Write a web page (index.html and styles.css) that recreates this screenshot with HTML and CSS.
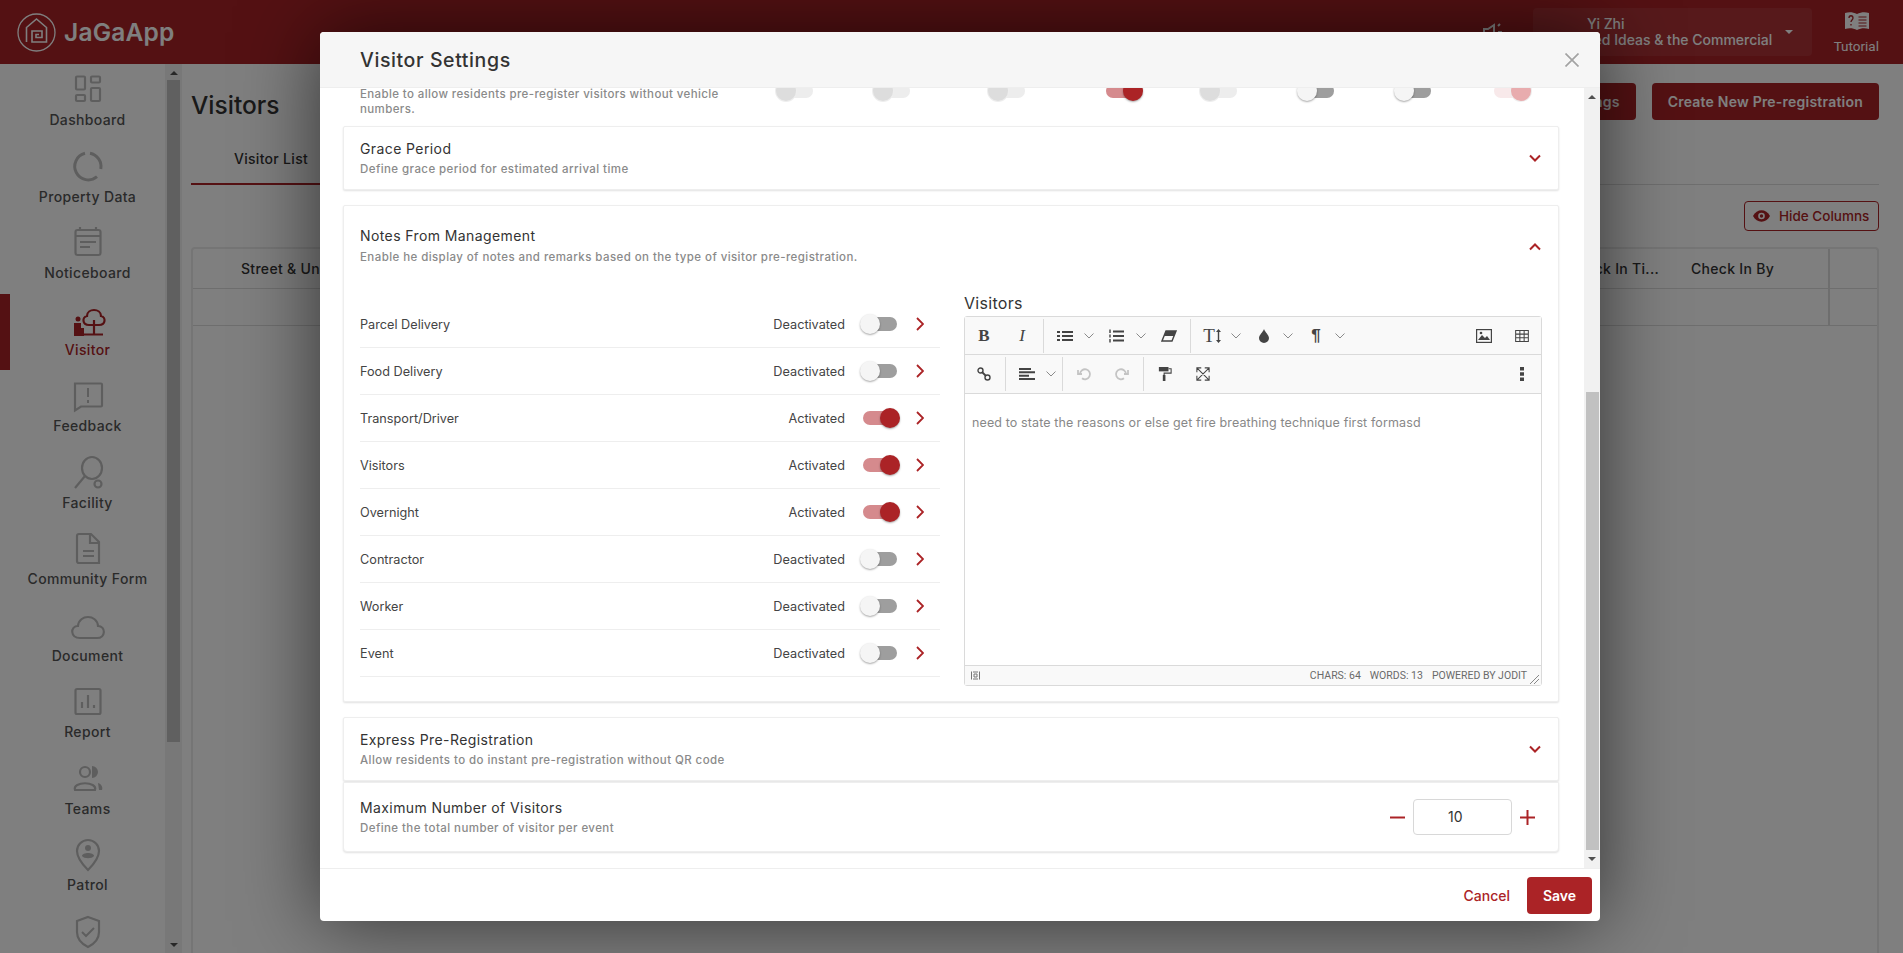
FILE: index.html
```html
<!DOCTYPE html>
<html lang="en">
<head>
    <meta charset="UTF-8">
    <meta name="viewport" content="width=device-width, initial-scale=1.0">
    <title>Visitor Settings</title>
    <link rel="stylesheet" href="styles.css">
</head>
<body>
    <svg class="defs" width="0" height="0">
        <symbol id="cardDown" viewBox="0 0 12 8"><path d="M1 1.5l5 5 5-5" fill="none" stroke="#ab2326" stroke-width="2"/></symbol>
        <symbol id="cardUp" viewBox="0 0 12 8"><path d="M1 6.5l5-5 5 5" fill="none" stroke="#ab2326" stroke-width="2"/></symbol>
        <symbol id="rowNext" viewBox="0 0 8 14"><path d="M1 1l6 6-6 6" fill="none" stroke="#ab2326" stroke-width="1.8"/></symbol>
        <symbol id="toolDown" viewBox="0 0 10 6"><path d="M.5 .5L5 5 9.500 .5" fill="none" stroke="#8a8a8a" stroke-width="1"/></symbol>
    </svg>

    <header class="topbar">
        <div class="brand">
            <svg class="logo" viewBox="0 0 39 39"><circle cx="19.500" cy="19.500" r="18.500" fill="none" stroke="#fff" stroke-width="1.300"/><path d="M9.500 29V14.500L19.500 6l10 8.500V29H15V18h10v6.500h-6v-3h3" fill="none" stroke="#fff" stroke-width="1.600"/></svg>
            <span class="brand-name">JaGaApp</span>
        </div>
        <svg class="speaker" viewBox="0 0 20 18"><path d="M1 6h4l6-4v14l-6-4H1z" fill="none" stroke="#fff" stroke-width="2"/><path d="M15 3l2-2M15 9h4M15 15l2 2" stroke="#fff" stroke-width="2"/></svg>
        <div class="user-box">
            <div class="user-text">
                <div class="user-name">Yi Zhi</div>
                <div class="user-org">Shared Ideas &amp; the Commercial</div>
            </div>
            <span class="caret"></span>
        </div>
        <div class="tutorial">
            <svg class="book" viewBox="0 0 26 20"><path d="M1 2c4-1.500 8-1 12 1 4-2 8-2.500 12-1v16c-4-1-8-1-12 1-4-2-8-2-12-1z" fill="#fff"/><path d="M14.500 6h8M14.500 9h8M14.500 12h8M14.500 15h8" stroke="#a82226" stroke-width="1"/><path d="M5 7c0-3 4-3 4 0 0 2-2 2-2 4M7 13v1.500" fill="none" stroke="#a82226" stroke-width="1.300"/></svg>
            <span>Tutorial</span>
        </div>
    </header>

    <div class="layout">
        <aside class="sidebar">
            <nav class="side-nav">
                <a class="side-item">
                    <svg viewBox="0 0 36 36"><g fill="none" stroke="#bdbdbd" stroke-width="2.200"><rect x="6" y="4.500" width="9" height="13" rx="1"/><rect x="21" y="4.500" width="9" height="6" rx="1"/><rect x="6" y="23" width="9" height="6" rx="1"/><rect x="21" y="16" width="9" height="13" rx="1"/></g></svg>
                    <span>Dashboard</span>
                </a>
                <a class="side-item">
                    <svg viewBox="0 0 36 36"><path d="M20 4.300A13.500 13.500 0 0 1 30.800 20M27 27.700A13.500 13.500 0 1 1 15 4.300" fill="none" stroke="#bdbdbd" stroke-width="3"/></svg>
                    <span>Property Data</span>
                </a>
                <a class="side-item">
                    <svg viewBox="0 0 36 36"><g fill="none" stroke="#bdbdbd" stroke-width="2.200"><rect x="5.500" y="5" width="25" height="25" rx="2"/><path d="M5.500 11h25M10 2v4M26 2v4"/><path d="M10 17h16M10 22h10"/></g></svg>
                    <span>Noticeboard</span>
                </a>
                <a class="side-item active">
                    <svg viewBox="0 0 36 36"><g fill="none" stroke="#ab2326" stroke-width="2.200"><path d="M24 23h-5c-7 0-7-8-2-9 0-8 14-8 14 0 5 1 5 9-2 9z"/><path d="M24 18v14M14 32.500h19"/></g><circle cx="8" cy="17" r="2.500" fill="#ab2326"/><path d="M4 21h7v5h3v8H4z" fill="#ab2326"/></svg>
                    <span>Visitor</span>
                </a>
                <a class="side-item">
                    <svg viewBox="0 0 36 36"><path d="M5 5.500h26a1 1 0 0 1 1 1v21a1 1 0 0 1-1 1H11l-6 4z" fill="none" stroke="#bdbdbd" stroke-width="2.200"/><path d="M18 10v9M18 22v3" stroke="#bdbdbd" stroke-width="2"/></svg>
                    <span>Feedback</span>
                </a>
                <a class="side-item">
                    <svg viewBox="0 0 36 36"><g fill="none" stroke="#bdbdbd" stroke-width="2.200"><ellipse cx="22" cy="13" rx="10" ry="11"/><path d="M15 21l-10 12"/><circle cx="28" cy="29" r="3.500"/></g></svg>
                    <span>Facility</span>
                </a>
                <a class="side-item">
                    <svg viewBox="0 0 36 36"><g fill="none" stroke="#bdbdbd" stroke-width="2.200"><path d="M9 3h12l8 8v21H9a2 2 0 0 1-2-2V5a2 2 0 0 1 2-2z"/><path d="M20 3v9h9"/><path d="M13 20h11M13 25h11"/></g></svg>
                    <span>Community Form</span>
                </a>
                <a class="side-item">
                    <svg viewBox="0 0 36 36"><path d="M10 30c-10 0-10-12-2-12 1-12 19-12 20 0 8 0 8 12-1 12z" fill="none" stroke="#bdbdbd" stroke-width="2.200"/></svg>
                    <span>Document</span>
                </a>
                <a class="side-item">
                    <svg viewBox="0 0 36 36"><rect x="5.500" y="5" width="25" height="25" rx="1.500" fill="none" stroke="#bdbdbd" stroke-width="2.200"/><path d="M12 24v-6M18 24V11M24 24v-3" stroke="#bdbdbd" stroke-width="2.200"/></svg>
                    <span>Report</span>
                </a>
                <a class="side-item">
                    <svg viewBox="0 0 36 36"><g fill="none" stroke="#bdbdbd" stroke-width="2.200"><circle cx="15" cy="11" r="5"/><path d="M5 29c-3-9 23-9 20 0z"/></g><path d="M22 5a6 6 0 0 1 0 12M28 22c4 1 5 5 4 7h-3z" fill="#bdbdbd"/></svg>
                    <span>Teams</span>
                </a>
                <a class="side-item">
                    <svg viewBox="0 0 36 36"><path d="M18 33C12 27 7 21 7 14a11 11 0 0 1 22 0c0 7-5 13-11 19z" fill="none" stroke="#bdbdbd" stroke-width="2.200"/><circle cx="18" cy="11" r="3" fill="#bdbdbd"/><path d="M12 19c0-4 12-4 12 0-2 3-10 3-12 0z" fill="#bdbdbd"/></svg>
                    <span>Patrol</span>
                </a>
                <a class="side-item">
                    <svg viewBox="0 0 36 36"><path d="M18 3l11 4v11c0 8-5 12-11 15C12 30 7 26 7 18V7z" fill="none" stroke="#bdbdbd" stroke-width="2.200"/><path d="M12 18l4 4 8-8" fill="none" stroke="#bdbdbd" stroke-width="2"/></svg>
                </a>
            </nav>
            <div class="side-scroll">
                <span class="arrow-up"></span>
                <div class="side-thumb"></div>
                <span class="arrow-down"></span>
            </div>
        </aside>

        <main class="main">
            <div class="page-head">
                <h1>Visitors</h1>
                <div class="page-actions">
                    <button class="btn-solid">Settings</button>
                    <button class="btn-solid">Create New Pre-registration</button>
                </div>
            </div>
            <div class="tabs"><div class="tab">Visitor List</div></div>
            <div class="tools">
                <button class="btn-outline">
                    <svg viewBox="0 0 18 12"><path d="M0 6c4-8 14-8 18 0-4 8-14 8-18 0z" fill="#ab2326"/><circle cx="9" cy="6" r="3.500" fill="#fff"/><circle cx="9" cy="6" r="1.800" fill="#ab2326"/></svg>
                    Hide Columns
                </button>
            </div>
            <div class="table">
                <div class="table-head">
                    <div class="th th-street">Street &amp; Unit</div>
                    <div class="th th-time">Check In Ti...</div>
                    <div class="th th-by">Check In By</div>
                    <div class="th th-end"></div>
                </div>
                <div class="table-row"><div class="td-end"></div></div>
            </div>
        </main>
    </div>

    <div class="overlay"></div>

    <section class="modal">
        <div class="modal-head">
            <h2>Visitor Settings</h2>
            <svg class="close" viewBox="0 0 14 14"><path d="M.5 .5l13 13M13.500 .5l-13 13" stroke="#a3a3a3" stroke-width="1.700"/></svg>
        </div>
        <div class="modal-body">
            <div class="modal-scroll">
                <div class="clipped-row">
                    <p class="clipped-text">Enable to allow residents pre-register visitors without vehicle numbers.</p>
                    <div class="clipped-toggles">
                        <span class="toggle faded"></span>
                        <span class="toggle faded"></span>
                        <span class="toggle faded"></span>
                        <span class="toggle on"></span>
                        <span class="toggle faded"></span>
                        <span class="toggle"></span>
                        <span class="toggle"></span>
                        <span class="toggle on faded"></span>
                    </div>
                </div>

                <div class="card card-plain">
                    <div class="card-text">
                        <h3>Grace Period</h3>
                        <p>Define grace period for estimated arrival time</p>
                    </div>
                    <svg class="card-chev"><use href="#cardDown"/></svg>
                </div>

                <div class="card card-notes">
                    <div class="notes-head">
                        <div class="card-text">
                            <h3>Notes From Management</h3>
                            <p>Enable he display of notes and remarks based on the type of visitor pre-registration.</p>
                        </div>
                        <svg class="card-chev"><use href="#cardUp"/></svg>
                    </div>
                    <div class="notes-body">
                        <ul class="note-list">
                            <li class="note-row"><span class="note-name">Parcel Delivery</span><span class="note-state">Deactivated</span><span class="toggle"></span><svg class="note-next"><use href="#rowNext"/></svg></li>
                            <li class="note-row"><span class="note-name">Food Delivery</span><span class="note-state">Deactivated</span><span class="toggle"></span><svg class="note-next"><use href="#rowNext"/></svg></li>
                            <li class="note-row"><span class="note-name">Transport/Driver</span><span class="note-state">Activated</span><span class="toggle on"></span><svg class="note-next"><use href="#rowNext"/></svg></li>
                            <li class="note-row"><span class="note-name">Visitors</span><span class="note-state">Activated</span><span class="toggle on"></span><svg class="note-next"><use href="#rowNext"/></svg></li>
                            <li class="note-row"><span class="note-name">Overnight</span><span class="note-state">Activated</span><span class="toggle on"></span><svg class="note-next"><use href="#rowNext"/></svg></li>
                            <li class="note-row"><span class="note-name">Contractor</span><span class="note-state">Deactivated</span><span class="toggle"></span><svg class="note-next"><use href="#rowNext"/></svg></li>
                            <li class="note-row"><span class="note-name">Worker</span><span class="note-state">Deactivated</span><span class="toggle"></span><svg class="note-next"><use href="#rowNext"/></svg></li>
                            <li class="note-row"><span class="note-name">Event</span><span class="note-state">Deactivated</span><span class="toggle"></span><svg class="note-next"><use href="#rowNext"/></svg></li>
                        </ul>
                        <div class="note-editor">
                            <div class="editor-label">Visitors</div>
                            <div class="editor">
                                <div class="tool-row">
                                    <span class="tool tool-b">B</span>
                                    <span class="tool tool-i">I</span>
                                    <span class="tool-sep"></span>
                                    <span class="tool"><svg viewBox="0 0 16 14"><path d="M0 2h3v2H0zM0 6h3v2H0zM0 10h3v2H0zM5 2h11v2H5zM5 6h11v2H5zM5 10h11v2H5z" fill="#444"/></svg></span>
                                    <svg class="tool-chev"><use href="#toolDown"/></svg>
                                    <span class="tool"><svg viewBox="0 0 16 14"><path d="M0 .5h2v3.500H0zM0 5.500h2v3H0zM0 10h2v3.500H0z" fill="#777"/><path d="M4 1.500h11v2H4zM4 6h11v2H4zM4 10.500h11v2H4z" fill="#444"/></svg></span>
                                    <svg class="tool-chev"><use href="#toolDown"/></svg>
                                    <span class="tool"><svg viewBox="0 0 16 14"><path d="M5 2h10l-4 10H1z" fill="none" stroke="#444" stroke-width="1.400"/><path d="M5 2h10l-2 5H3z" fill="#444"/></svg></span>
                                    <span class="tool-sep"></span>
                                    <span class="tool tool-t">T<svg viewBox="0 0 5 14"><path d="M2.500 0L5 3H3.200v8H5L2.500 14 0 11h1.800V3H0z" fill="#444"/></svg></span>
                                    <svg class="tool-chev"><use href="#toolDown"/></svg>
                                    <span class="tool"><svg class="tool-drop" viewBox="0 0 10 14"><path d="M5 0c1 3 5 6 5 9a5 5 0 0 1-10 0c0-3 4-6 5-9z" fill="#444"/></svg></span>
                                    <svg class="tool-chev"><use href="#toolDown"/></svg>
                                    <span class="tool tool-p">¶</span>
                                    <svg class="tool-chev"><use href="#toolDown"/></svg>
                                    <span class="tool-gap"></span>
                                    <span class="tool"><svg viewBox="0 0 16 14"><rect x=".6" y=".6" width="14.800" height="12.800" fill="none" stroke="#444" stroke-width="1.200"/><path d="M2 11l4-5 3 3 2-2 3 4z" fill="#444"/><circle cx="5" cy="4" r="1.300" fill="#444"/></svg></span>
                                    <span class="tool"><svg class="tool-table" viewBox="0 0 16 14"><path d="M.6 .6h14.800v12.800H.6zM.6 4.800h14.800M.6 9h14.800M5.500 .6v12.800M10.500 .6v12.800" fill="none" stroke="#444" stroke-width="1.200"/></svg></span>
                                </div>
                                <div class="tool-row tool-row-last">
                                    <span class="tool"><svg viewBox="0 0 14 14"><circle cx="3.500" cy="3.500" r="2.500" fill="none" stroke="#444" stroke-width="1.400"/><circle cx="10.500" cy="10.500" r="2.500" fill="none" stroke="#444" stroke-width="1.400"/><path d="M5 5l4 4" stroke="#444" stroke-width="1.800"/></svg></span>
                                    <span class="tool-sep"></span>
                                    <span class="tool"><svg viewBox="0 0 16 12"><path d="M0 0h12v2H0zM0 3.300h16v2H0zM0 6.700h10v2H0zM0 10h16v2H0z" fill="#444"/></svg></span>
                                    <svg class="tool-chev"><use href="#toolDown"/></svg>
                                    <span class="tool-sep"></span>
                                    <span class="tool"><svg viewBox="0 0 14 14"><path d="M3 7a5 5 0 1 1 2 4.300M1 3v4h4" fill="none" stroke="#c4c4c4" stroke-width="1.800"/></svg></span>
                                    <span class="tool"><svg viewBox="0 0 14 14"><path d="M11 7a5 5 0 1 0-2 4.300M13 3v4H9" fill="none" stroke="#c4c4c4" stroke-width="1.800"/></svg></span>
                                    <span class="tool-sep"></span>
                                    <span class="tool"><svg viewBox="0 0 14 16"><path d="M0 0h11v5H0z" fill="#444"/><path d="M11 2h3v5H6v2" fill="none" stroke="#444" stroke-width="1.200"/><path d="M4.500 9h3v7h-3z" fill="#444"/></svg></span>
                                    <span class="tool"><svg viewBox="0 0 16 16"><path d="M1 6V1h5M10 1h5v5M15 10v5h-5M6 15H1v-5M1 1l14 14M15 1L1 15" fill="none" stroke="#444" stroke-width="1.200"/></svg></span>
                                    <span class="tool-gap"></span>
                                    <span class="tool"><svg class="tool-dots" viewBox="0 0 4 14"><path d="M0 0h4v3.500H0zM0 5.200h4v3.500H0zM0 10.500h4V14H0z" fill="#444"/></svg></span>
                                </div>
                                <div class="editor-text"><p>need to state the reasons or else get fire breathing technique first formasd</p></div>
                                <div class="editor-status">
                                    <svg class="status-icon" viewBox="0 0 9 9"><path d="M.5 .5v8M8.500 .5v8M2 1h5M2 8h5M3 3h3v3H3z" fill="none" stroke="#777" stroke-width="1"/></svg>
                                    <span class="status-gap"></span>
                                    <span>CHARS: 64</span>
                                    <span>WORDS: 13</span>
                                    <span>POWERED BY JODIT</span>
                                    <svg class="status-grip" viewBox="0 0 11 11"><path d="M1 10L10 1M5 10l5-5" stroke="#888" stroke-width="1"/></svg>
                                </div>
                            </div>
                        </div>
                    </div>
                </div>

                <div class="card card-express">
                    <div class="card-text">
                        <h3>Express Pre-Registration</h3>
                        <p>Allow residents to do instant pre-registration without QR code</p>
                    </div>
                    <svg class="card-chev"><use href="#cardDown"/></svg>
                </div>
                <div class="card card-max">
                    <div class="card-text">
                        <h3>Maximum Number of Visitors</h3>
                        <p>Define the total number of visitor per event</p>
                    </div>
                    <div class="stepper">
                        <svg viewBox="0 0 15 15"><path d="M0 7.500h15" stroke="#ab2326" stroke-width="2"/></svg>
                        <div class="stepper-value">10</div>
                        <svg viewBox="0 0 15 15"><path d="M0 7.500h15M7.500 0v15" stroke="#ab2326" stroke-width="2"/></svg>
                    </div>
                </div>
            </div>
            <div class="modal-track">
                <span class="arrow-up"></span>
                <div class="modal-thumb"></div>
                <span class="arrow-down"></span>
            </div>
        </div>
        <div class="modal-foot">
            <button class="btn-cancel">Cancel</button>
            <button class="btn-save">Save</button>
        </div>
    </section>
</body>
</html>
```

FILE: styles.css
```css
* {
    box-sizing: border-box;
}
body {
    margin: 0;
    height: 100vh;
    overflow: hidden;
    position: relative;
    background: #fff;
    color: #333;
    font-family: Inter, "Open Sans", sans-serif;
}
h1, h2, h3, p, ul {
    margin: 0;
    padding: 0;
}
button {
    font-family: inherit;
    cursor: pointer;
}
.defs {
    position: absolute;
}

/* top bar */
.topbar {
    height: 64px;
    display: flex;
    align-items: center;
    background: #a82226;
    color: #fff;
}
.brand {
    display: flex;
    align-items: center;
    margin-left: 17px;
}
.logo {
    width: 39px;
    height: 39px;
}
.brand-name {
    margin-left: 8px;
    font-size: 24.500px;
    font-weight: 600;
    letter-spacing: .2px;
}
.speaker {
    width: 20px;
    height: 18px;
    margin-left: auto;
}
.user-box {
    width: 279px;
    height: 48px;
    margin-left: 30px;
    display: flex;
    align-items: center;
    justify-content: flex-end;
    padding-right: 19px;
    background: rgba(255, 255, 255, .08);
    border-radius: 4px;
    font-size: 14px;
    font-weight: 500;
}
.user-text {
    width: 202px;
    line-height: 16px;
    margin-right: 20px;
    text-align: right;
    white-space: nowrap;
}
.user-name {
    text-align: left;
    padding-left: 24px;
}
.caret {
    border: 4px solid transparent;
    border-top-color: #fff;
    margin-top: 4px;
}
.tutorial {
    width: 67px;
    margin-right: 24px;
    display: flex;
    flex-direction: column;
    align-items: flex-end;
    font-family: Roboto, sans-serif;
    font-size: 13.500px;
}
.book {
    width: 26px;
    height: 20px;
    margin: 0 9px 7px 0;
}

/* page under the modal */
.layout {
    display: flex;
    height: 889px;
}
.sidebar {
    width: 182px;
    display: flex;
    flex: none;
}
.side-nav {
    width: 165px;
    overflow: hidden;
    display: flex;
    flex-direction: column;
}
.side-item {
    height: 76.5px;
    flex: none;
    display: flex;
    flex-direction: column;
    align-items: center;
    padding-top: 8px;
    border-left: 10px solid transparent;
    font-size: 14px;
    letter-spacing: .35px;
    line-height: 18px;
    color: #555;
    font-weight: 500;
    white-space: nowrap;
}
.side-item svg {
    width: 36px;
    height: 36px;
    margin-bottom: 3px;
}
.side-item.active {
    border-left-color: #a82226;
    color: #ab2326;
}
.side-scroll {
    width: 17px;
    background: #f1f1f1;
    display: flex;
    flex-direction: column;
    align-items: center;
    padding: 7px 0 6px;
}
.side-thumb {
    width: 13px;
    height: 662px;
    margin-top: 5px;
    background: #c1c1c1;
}
.arrow-up, .arrow-down {
    border: 4px solid transparent;
    flex: none;
}
.arrow-up {
    border-bottom-color: #505050;
    border-top-width: 0;
}
.arrow-down {
    border-top-color: #505050;
    border-bottom-width: 0;
    margin-top: auto;
}
.main {
    flex: 1;
    padding: 19px 24px 0 9px;
    display: flex;
    flex-direction: column;
}
.page-head {
    display: flex;
    justify-content: space-between;
    height: 37px;
    flex: none;
}
.page-head h1 {
    font-size: 24.500px;
    font-weight: 500;
    line-height: 44px;
    color: #333;
}
.page-actions {
    display: flex;
    gap: 16px;
}
.btn-solid {
    height: 37px;
    padding: 0 16px;
    border: 0;
    border-radius: 4px;
    background: #a82226;
    color: #fff;
    font-size: 14px;
    letter-spacing: .22px;
    font-weight: 600;
}
.tabs {
    margin-top: 15px;
    height: 50px;
    flex: none;
    border-bottom: 1px solid #ddd;
}
.tab {
    width: 160px;
    height: 50px;
    text-align: center;
    padding-top: 15px;
    font-size: 14px;
    letter-spacing: .3px;
    font-weight: 500;
    line-height: 18px;
    border-bottom: 2px solid #ab2326;
}
.tools {
    display: flex;
    justify-content: flex-end;
    margin-top: 16px;
    flex: none;
}
.btn-outline {
    height: 30px;
    width: 135px;
    display: flex;
    align-items: center;
    padding: 0 0 0 8px;
    gap: 9px;
    background: #fff;
    border: 1px solid #ab2326;
    border-radius: 4px;
    color: #ab2326;
    font-size: 13.500px;
    font-weight: 500;
    white-space: nowrap;
}
.btn-outline svg {
    width: 17px;
    height: 12px;
    flex: none;
}
.table {
    margin-top: 16px;
    flex: 1;
    border: 2px solid #eaeaea;
    border-bottom: 0;
    border-radius: 4px 4px 0 0;
}
.table-head {
    display: flex;
    height: 40px;
    border-bottom: 1px solid #ddd;
    align-items: center;
    font-size: 14px;
    letter-spacing: .3px;
    font-weight: 500;
}
.th-street {
    padding-left: 48px;
}
.th-time {
    margin-left: auto;
    margin-right: 32px;
}
.th-by {
    width: 137px;
}
.th-end {
    width: 49px;
    height: 100%;
    border-left: 2px solid #ddd;
}
.table-row {
    height: 37px;
    border-bottom: 1px solid #ddd;
    display: flex;
    justify-content: flex-end;
}
.td-end {
    width: 49px;
    border-left: 2px solid #ddd;
}
.overlay {
    position: absolute;
    inset: 0;
    background: rgba(0, 0, 0, .5);
}

/* modal */
.modal {
    position: absolute;
    left: 320px;
    top: 32px;
    width: 1280px;
    height: 889px;
    display: flex;
    flex-direction: column;
    background: #fff;
    border-radius: 4px;
    box-shadow: 0 0 80px rgba(0, 0, 0, .6);
    overflow: hidden;
}
.modal-head {
    height: 56px;
    flex: none;
    display: flex;
    align-items: center;
    justify-content: space-between;
    padding: 0 21px 0 40px;
    background: #f6f6f6;
    border-bottom: 1px solid #eee;
    position: relative;
    z-index: 1;
}
.modal-head h2 {
    font-size: 19.500px;
    letter-spacing: .6px;
    font-weight: 500;
    color: #333;
}
.close {
    width: 14px;
    height: 14px;
}
.modal-body {
    height: 780px;
    flex: none;
    display: flex;
}
.modal-scroll {
    width: 1264px;
    padding: 0 25px 0 23px;
}
.modal-track {
    width: 16px;
    background: #f1f1f1;
    display: flex;
    flex-direction: column;
    align-items: center;
    padding: 7px 0 7px;
}
.modal-thumb {
    width: 13px;
    height: 458px;
    margin-top: 293px;
    background: #c1c1c1;
}
.clipped-row {
    height: 38px;
    overflow: hidden;
    position: relative;
    display: flex;
    padding-left: 17px;
}
.clipped-text {
    width: 416px;
    padding-right: 50px;
    margin-top: -1px;
    font-size: 11.500px;
    letter-spacing: .38px;
    font-weight: 500;
    line-height: 15px;
    color: #8a8a8a;
}
.clipped-toggles {
    display: grid;
    grid-template-columns: 97px 115px 118px 94px 97px 97px 100px 37px;
    margin-top: -4px;
}
.clipped-toggles .toggle {
    margin-left: 3px;
}
.clipped-toggles .toggle.on {
    margin-left: 0;
}
.card {
    border: 1px solid #eee;
    border-radius: 2px;
    box-shadow: 0 1px 2px rgba(0, 0, 0, .12);
    background: #fff;
}
.card-plain, .card-express, .card-max {
    display: flex;
    align-items: center;
    justify-content: space-between;
    padding: 0 17px 0 16px;
}
.card-plain {
    height: 64px;
}
.card-express {
    height: 64px;
    margin-top: 15px;
}
.card-max {
    height: 70px;
    margin-top: 1px;
    border-radius: 0 0 4px 4px;
}
.card-text h3 {
    font-size: 14px;
    letter-spacing: .4px;
    font-weight: 400;
    line-height: 20px;
    color: #333;
}
.card-text p {
    font-size: 11.500px;
    letter-spacing: .42px;
    font-weight: 500;
    line-height: 16px;
    margin-top: 2px;
    color: #8a8a8a;
}
.card-chev {
    width: 12px;
    height: 8px;
    flex: none;
}
.card-notes {
    height: 497px;
    margin-top: 15px;
}
.notes-head {
    height: 87px;
    display: flex;
    justify-content: space-between;
    align-items: flex-start;
    padding: 20px 17px 0 16px;
}
.notes-head p {
    margin-top: 3px;
}
.notes-head .card-chev {
    margin-top: 17px;
}
.notes-body {
    display: grid;
    grid-template-columns: 580px 578px;
    gap: 24px;
    padding: 0 16px;
}
.note-list {
    list-style: none;
    padding-top: 8px;
}
.note-row {
    height: 47px;
    display: flex;
    align-items: center;
    border-bottom: 1px solid #eee;
    padding-right: 16px;
    font-size: 12.700px;
    color: #444;
}
.note-name {
    margin-right: auto;
}
.note-state {
    margin-right: 18px;
}
.note-next {
    width: 8px;
    height: 14px;
    margin-left: 19px;
}
.toggle {
    display: block;
    position: relative;
    width: 34px;
    height: 14px;
    border-radius: 7px;
    background: #9e9e9e;
    flex: none;
}
.toggle::after {
    content: "";
    position: absolute;
    left: -3px;
    top: -3px;
    width: 20px;
    height: 20px;
    border-radius: 50%;
    background: #f5f5f5;
    box-shadow: 0 1px 2px rgba(0, 0, 0, .35);
}
.toggle.on {
    background: #d58a8d;
}
.toggle.on::after {
    left: 17px;
    background: #ab2326;
}
.toggle.faded {
    background: #ededed;
}
.toggle.faded::after {
    background: #ddd;
    box-shadow: 0 0 0 1px #eee;
}
.toggle.on.faded {
    background: #f8e9ea;
}
.toggle.on.faded::after {
    background: #e8acae;
}
.editor-label {
    font-size: 16px;
    letter-spacing: .3px;
    line-height: 18px;
    padding-top: 1px;
    height: 19px;
    margin-bottom: 4px;
    color: #333;
}
.editor {
    height: 370px;
    border: 1px solid #dadada;
    border-radius: 3px;
    display: flex;
    flex-direction: column;
}
.tool-row {
    height: 38px;
    flex: none;
    display: flex;
    align-items: center;
    background: #f9f9f9;
    border-bottom: 1px solid #dadada;
}
.tool-row-last {
    height: 39px;
}
.tool {
    width: 38px;
    height: 100%;
    flex: none;
    display: flex;
    align-items: center;
    justify-content: center;
    color: #444;
}
.tool svg {
    width: 16px;
    height: 14px;
}
.tool svg.tool-drop {
    width: 10px;
}
.tool svg.tool-dots {
    width: 4px;
}
.tool svg.tool-table {
    width: 14px;
    height: 12px;
}
.tool-b {
    font: bold 17px "Liberation Serif", serif;
}
.tool-i {
    font: italic 17px "Liberation Serif", serif;
}
.tool-p {
    font: bold 17px "Liberation Sans", sans-serif;
}
.tool-t {
    font: 19px "Liberation Serif", serif;
}
.tool-t svg {
    width: 5px;
    height: 14px;
    margin-left: 1px;
}
.tool-chev {
    width: 10px;
    height: 6px;
    margin-right: 4px;
    flex: none;
}
.tool-sep {
    width: 1px;
    height: 34px;
    margin: 0 2px;
    background: #dadada;
    flex: none;
}
.tool-gap {
    flex: 1;
}
.editor-text {
    flex: 1;
    padding: 20px 7px 0;
    font-size: 12.500px;
    letter-spacing: .12px;
    line-height: 18px;
    color: #888;
}
.editor-status {
    height: 20px;
    flex: none;
    display: flex;
    align-items: center;
    gap: 9px;
    padding: 0 1px 0 6px;
    background: #f9f9f9;
    border-top: 1px solid #dadada;
    font-family: Roboto, sans-serif;
    font-size: 10.500px;
    color: #6a6a6a;
}
.status-icon {
    width: 9px;
    height: 9px;
}
.status-gap {
    flex: 1;
}
.status-grip {
    width: 11px;
    height: 11px;
    margin-left: -7px;
    align-self: flex-end;
}
.stepper {
    display: flex;
    align-items: center;
    margin-right: 6px;
}
.stepper svg {
    width: 15px;
    height: 15px;
}
.stepper-value {
    width: 99px;
    height: 36px;
    margin: 0 8px;
    padding-left: 34px;
    border: 1px solid #d8d8d8;
    border-radius: 4px;
    font-size: 14px;
    line-height: 34px;
    color: #333;
}
.modal-foot {
    height: 53px;
    flex: none;
    display: flex;
    align-items: center;
    justify-content: flex-end;
    gap: 17px;
    padding-right: 8px;
    border-top: 1px solid #eee;
}
.btn-cancel {
    border: 0;
    padding: 0;
    background: none;
    color: #ab2326;
    font-size: 14px;
    font-weight: 500;
}
.btn-save {
    width: 65px;
    height: 37px;
    border: 0;
    border-radius: 4px;
    background: #ab2326;
    color: #fff;
    font-size: 14px;
    font-weight: 600;
}
```
